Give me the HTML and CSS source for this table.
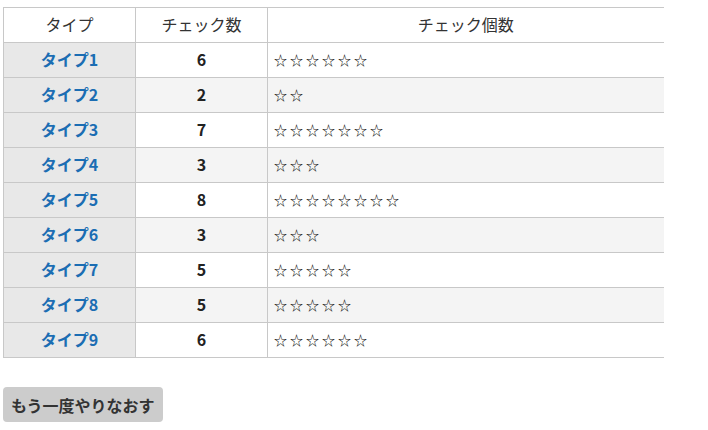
FILE: index.html
```html
<!DOCTYPE html>
<html lang="ja">
<head>
<meta charset="utf-8">
<link rel="stylesheet" href="styles.css">
</head>
<body>
<table class="result">
  <thead>
    <tr><th class="c1">タイプ</th><th class="c2">チェック数</th><th class="c3">チェック個数</th></tr>
  </thead>
  <tbody>
    <tr><th class="type">タイプ1</th><td class="num">6</td><td class="stars">☆☆☆☆☆☆</td></tr>
    <tr><th class="type">タイプ2</th><td class="num">2</td><td class="stars">☆☆</td></tr>
    <tr><th class="type">タイプ3</th><td class="num">7</td><td class="stars">☆☆☆☆☆☆☆</td></tr>
    <tr><th class="type">タイプ4</th><td class="num">3</td><td class="stars">☆☆☆</td></tr>
    <tr><th class="type">タイプ5</th><td class="num">8</td><td class="stars">☆☆☆☆☆☆☆☆</td></tr>
    <tr><th class="type">タイプ6</th><td class="num">3</td><td class="stars">☆☆☆</td></tr>
    <tr><th class="type">タイプ7</th><td class="num">5</td><td class="stars">☆☆☆☆☆</td></tr>
    <tr><th class="type">タイプ8</th><td class="num">5</td><td class="stars">☆☆☆☆☆</td></tr>
    <tr><th class="type">タイプ9</th><td class="num">6</td><td class="stars">☆☆☆☆☆☆</td></tr>
  </tbody>
</table>
<div class="actions"><button class="retry">もう一度やりなおす</button></div>
</body>
</html>
```
FILE: styles.css
```css
html, body { margin: 0; padding: 0; background: #fff; }
body {
  padding: 7px 0 0 3px;
  font-family: "Noto Sans CJK JP", "Noto Sans", sans-serif;
  color: #333;
}
.result {
  width: 660px;
  border-collapse: collapse;
  table-layout: fixed;
}
.result th, .result td {
  height: 35px;
  padding: 0 0 2px 0;
  box-sizing: border-box;
  border-top: 1px solid #c8c8c8;
  border-bottom: 1px solid #c8c8c8;
  border-left: 1px solid #c8c8c8;
}
.result thead th {
  background: #fff;
  font-weight: normal;
  font-size: 16px;
  color: #333;
}
.c1, .c2 { width: 132px; }
.c3 { width: 396px; }
.result tbody tr:nth-child(odd) td { background: #fff; }
.result tbody tr:nth-child(even) td { background: #f4f4f4; }
.result th.type {
  background: #e8e8e8;
  color: #1b6db3;
  font-weight: bold;
  font-size: 16px;
}
.num {
  text-align: center;
  font-weight: bold;
  font-size: 16px;
  color: #222;
}
.result td.stars {
  text-align: left;
  padding-left: 6px;
  font-family: "Noto Sans CJK JP", sans-serif;
  font-size: 13px;
  letter-spacing: 3px;
  color: #111;
}
.actions { margin-top: 29px; }
.retry {
  background: #cccccc;
  border: none;
  border-radius: 4px;
  height: 35px;
  padding: 0 8px;
  font-family: "Noto Sans CJK JP", sans-serif;
  font-weight: bold;
  font-size: 16px;
  color: #333;
}
```
